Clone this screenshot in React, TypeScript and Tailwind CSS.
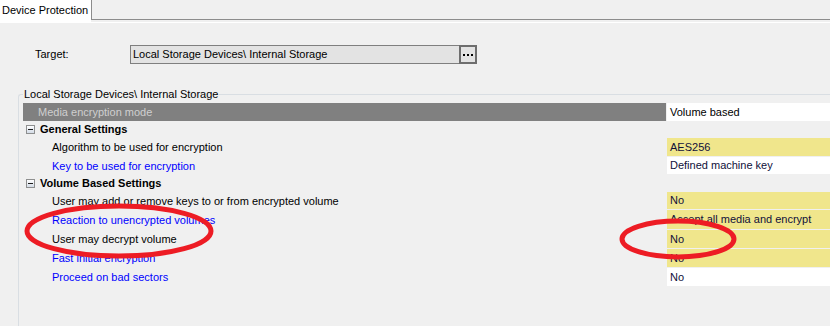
import React from "react";

type Row =
  | { kind: "sel"; name: string; value: string; h: string }
  | { kind: "cat"; name: string; h: string }
  | { kind: "item"; name: string; value: string; h: string; link?: boolean; khaki?: boolean };

const rows: Row[] = [
  { kind: "sel", name: "Media encryption mode", value: "Volume based", h: "h-[18px]" },
  { kind: "cat", name: "General Settings", h: "h-[17px]" },
  { kind: "item", name: "Algorithm to be used for encryption", value: "AES256", h: "h-[19px]", khaki: true },
  { kind: "item", name: "Key to be used for encryption", value: "Defined machine key", h: "h-[18px]", link: true },
  { kind: "cat", name: "Volume Based Settings", h: "h-[17px]" },
  { kind: "item", name: "User may add or remove keys to or from encrypted volume", value: "No", h: "h-[18px]", khaki: true },
  { kind: "item", name: "Reaction to unencrypted volumes", value: "Accept all media and encrypt", h: "h-[20px]", link: true, khaki: true },
  { kind: "item", name: "User may decrypt volume", value: "No", h: "h-[19px]", khaki: true },
  { kind: "item", name: "Fast initial encryption", value: "No", h: "h-[19px]", link: true, khaki: true },
  { kind: "item", name: "Proceed on bad sectors", value: "No", h: "h-[19px]", link: true },
];

function MinusBox() {
  return (
    <span className="flex h-[9px] w-[9px] items-center justify-center border border-[#8e8f8f] bg-gradient-to-b from-white to-[#d3dbe6]">
      <span className="h-[1px] w-[5px] bg-[#1d1d1d]" />
    </span>
  );
}

function GridRow({ row }: { row: Row }) {
  if (row.kind === "cat") {
    return (
      <div className={`${row.h} flex items-center pl-[3px]`}>
        <MinusBox />
        <span className="ml-[5px] font-bold text-black">{row.name}</span>
      </div>
    );
  }
  if (row.kind === "sel") {
    return (
      <div className={`${row.h} flex`}>
        <div className="flex w-[643px] items-center bg-[#808080] pl-[15px] text-[#cfcfcf]">{row.name}</div>
        <div className="ml-[1px] flex flex-1 items-center bg-white pl-[3px] text-black">{row.value}</div>
      </div>
    );
  }
  return (
    <div className={`${row.h} flex`}>
      <div className={`flex w-[643px] items-center pl-[29px] ${row.link ? "text-[#0000ff]" : "text-black"}`}>{row.name}</div>
      <div className={`mb-[1px] ml-[1px] flex flex-1 items-center pl-[3px] text-[#10103a] ${row.khaki ? "bg-[#f0e68c]" : "bg-white"}`}>
        {row.value}
      </div>
    </div>
  );
}

export default function App() {
  return (
    <div className="relative h-[326px] w-[830px] overflow-hidden bg-[#f0f0f0] font-['Liberation_Sans',Arial,sans-serif] text-[11px] leading-[13px]">
      {/* tab strip */}
      <div className="flex h-[20px]">
        <div className="flex w-[92px] items-center border-r border-[#8c8c8c] bg-white pl-[2px] text-black">Device Protection</div>
        <div className="flex-1 border-b border-[#8c8c8c]" />
      </div>
      <div className="flex h-[3px]">
        <div className="w-[91px] bg-white" />
        <div className="flex-1 border-b border-white" />
      </div>

      {/* target selector */}
      <div className="mt-[22px] flex items-center">
        <span className="w-[130px] pl-[35px] text-black">Target:</span>
        <div className="flex h-[19px] w-[347px] items-center border border-[#7f7f7f] bg-[#e3e3e3]">
          <span className="flex-1 pl-[2px] text-black">Local Storage Devices\ Internal Storage</span>
          <button
            type="button"
            className="-my-[1px] -mr-[1px] flex h-[19px] w-[18px] items-center justify-center gap-[2px] border-2 border-[#6e6e6e] bg-[#e3e3e3]"
          >
            <span className="h-[2px] w-[2px] bg-black" />
            <span className="h-[2px] w-[2px] bg-black" />
            <span className="h-[2px] w-[2px] bg-black" />
          </button>
        </div>
      </div>

      {/* group box */}
      <fieldset className="ml-[18px] mt-[24px] h-[260px] w-[830px] rounded-tl-[3px] border-l border-t border-[#d9dee3] pt-[2px] pl-[4px]">
        <legend className="px-[1px] text-black">Local Storage Devices\ Internal Storage</legend>
        <div className="flex flex-col">
          {rows.map((row) => (
            <GridRow key={row.name} row={row} />
          ))}
        </div>
      </fieldset>

      {/* red annotation marks */}
      <svg className="pointer-events-none absolute inset-0" width="830" height="326" viewBox="0 0 830 326">
        <ellipse cx="119" cy="231" rx="92" ry="25" fill="none" stroke="#ed1c24" strokeWidth="5" />
        <ellipse cx="678" cy="239" rx="56" ry="18" fill="none" stroke="#ed1c24" strokeWidth="5" />
      </svg>
    </div>
  );
}
